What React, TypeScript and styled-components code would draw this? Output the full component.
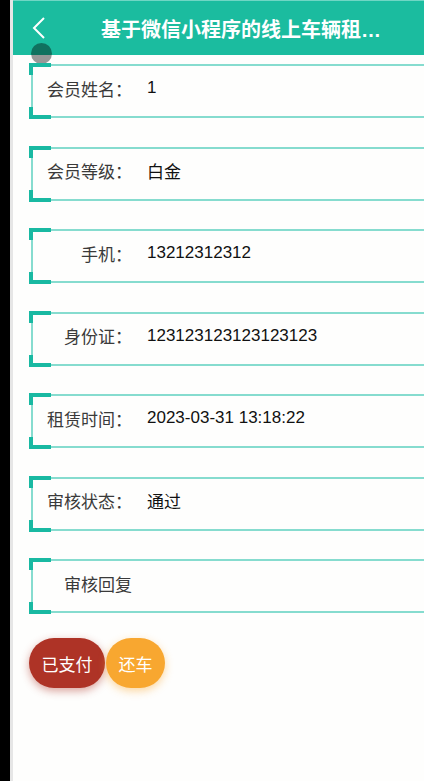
import * as React from 'react'
import styled, { createGlobalStyle } from 'styled-components'

const GlobalStyle = createGlobalStyle`
  html, body {
    margin: 0;
    padding: 0;
    background: #000;
  }
  body {
    font-family: 'Liberation Sans', 'Noto Sans CJK SC', sans-serif;
  }
`

const Frame = styled.div`
  display: flex;
  min-height: 781px;
  background: #000;
  padding-left: 10px;
`

const Page = styled.div`
  position: relative;
  flex: 1;
  min-width: 0;
  overflow: hidden;
  background: #fefefd;
  border-left: 3px solid #e6e6e6;
`

const Header = styled.div`
  display: flex;
  align-items: center;
  height: 55px;
  background: #1bbc9f;
  border-top: 1px solid #6fd6c4;
  box-sizing: border-box;
`

const BackButton = styled.div`
  display: flex;
  align-items: center;
  justify-content: center;
  flex-shrink: 0;
  width: 52px;
  margin-right: 36px;
  height: 100%;
`

const Title = styled.div`
  width: 290px;
  color: #fff;
  font-size: 20px;
  font-weight: 700;
  white-space: nowrap;
  overflow: hidden;
  text-overflow: ellipsis;
`

const Dot = styled.div`
  position: absolute;
  left: 18px;
  top: 43px;
  width: 21px;
  height: 21px;
  border-radius: 50%;
  background: rgba(0, 0, 0, 0.4);
`

const List = styled.div`
  display: flex;
  flex-direction: column;
  gap: 28.5px;
  padding-top: 9px;
  margin-left: 18px;
  margin-right: -12px;
`

const Row = styled.div`
  position: relative;
  display: flex;
  align-items: center;
  height: 54px;
  box-sizing: border-box;
  border: 2px solid #86dccf;
  padding-left: 12px;
  font-size: 17px;

  &::before,
  &::after {
    content: '';
    position: absolute;
    left: -4px;
    width: 18px;
    height: 8px;
    border-left: 4px solid #19b9a2;
  }
  &::before {
    top: -3px;
    border-top: 4px solid #19b9a2;
  }
  &::after {
    bottom: -3px;
    border-bottom: 4px solid #19b9a2;
  }
`

const Label = styled.span`
  width: 87px;
  text-align: right;
  color: #3a3a3a;
  margin-top: -6px;
`

const Value = styled.span`
  margin-left: 15px;
  color: #111;
  margin-top: -6px;
`

const Actions = styled.div`
  display: flex;
  gap: 1px;
  margin: 25px 0 0 16px;
`

const ActionButton = styled.div<{ $bg: string; $shadow: string }>`
  display: flex;
  align-items: center;
  justify-content: center;
  height: 50px;
  padding: 0 12.5px;
  border-radius: 25px;
  background: ${p => p.$bg};
  box-shadow: 0 3px 8px ${p => p.$shadow};
  color: #fff;
  font-size: 17px;
`

const rows: { label: string; value?: string }[] = [
  { label: '会员姓名：', value: '1' },
  { label: '会员等级：', value: '白金' },
  { label: '手机：', value: '13212312312' },
  { label: '身份证：', value: '123123123123123123' },
  { label: '租赁时间：', value: '2023-03-31 13:18:22' },
  { label: '审核状态：', value: '通过' },
  { label: '审核回复' },
]

const BackIcon = () => (
  <svg width="16" height="24" viewBox="0 0 16 24">
    <polyline points="13,2 3,12 13,22" fill="none" stroke="#fff" strokeWidth="2" />
  </svg>
)

export default function App() {
  return (
    <>
      <GlobalStyle />
      <Frame>
        <Page>
          <Header>
            <BackButton>
              <BackIcon />
            </BackButton>
            <Title>基于微信小程序的线上车辆租赁系统</Title>
          </Header>
          <Dot />
          <List>
            {rows.map(r => (
              <Row key={r.label}>
                <Label>{r.label}</Label>
                {r.value && <Value>{r.value}</Value>}
              </Row>
            ))}
          </List>
          <Actions>
            <ActionButton $bg="#ae3326" $shadow="rgba(174, 51, 38, 0.45)">已支付</ActionButton>
            <ActionButton $bg="#f8a730" $shadow="rgba(248, 167, 48, 0.45)">还车</ActionButton>
          </Actions>
        </Page>
      </Frame>
    </>
  )
}
